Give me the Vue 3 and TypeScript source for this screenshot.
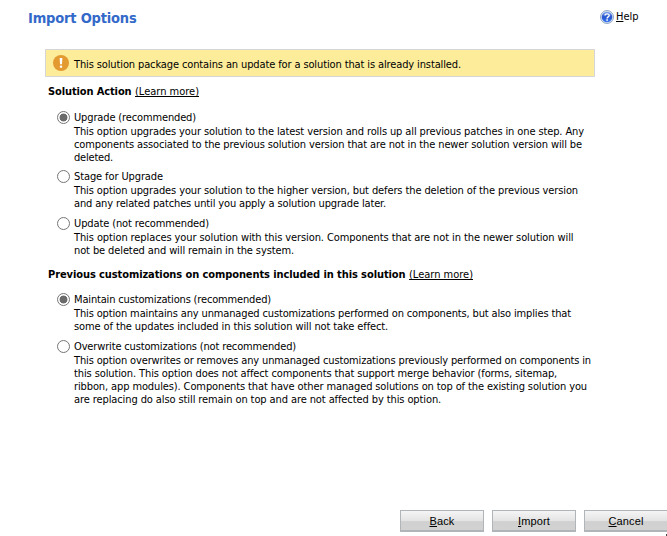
<script setup lang="ts">
import type { Directive } from 'vue'

interface Line { text: string; width: number }
interface Option { id: string; title: Line; lines: Line[]; checked: boolean }
interface Section { id: string; heading: Line; link: Line; options: Option[] }
interface Action { key: string; rest: string; width: number }

const sections: Section[] = [
  {
    id: 'action',
    heading: { text: 'Solution Action', width: 83.5 },
    link: { text: '(Learn more)', width: 64 },
    options: [
      {
        id: 'upgrade', checked: true,
        title: { text: 'Upgrade (recommended)', width: 122 },
        lines: [
          { text: 'This option upgrades your solution to the latest version and rolls up all previous patches in one step. Any', width: 510 },
          { text: 'components associated to the previous solution version that are not in the newer solution version will be', width: 508 },
          { text: 'deleted.', width: 39 },
        ],
      },
      {
        id: 'stage', checked: false,
        title: { text: 'Stage for Upgrade', width: 89 },
        lines: [
          { text: 'This option upgrades your solution to the higher version, but defers the deletion of the previous version', width: 504 },
          { text: 'and any related patches until you apply a solution upgrade later.', width: 312 },
        ],
      },
      {
        id: 'update', checked: false,
        title: { text: 'Update (not recommended)', width: 135 },
        lines: [
          { text: 'This option replaces your solution with this version. Components that are not in the newer solution will', width: 499.5 },
          { text: 'not be deleted and will remain in the system.', width: 220 },
        ],
      },
    ],
  },
  {
    id: 'custom',
    heading: { text: 'Previous customizations on components included in this solution', width: 357.5 },
    link: { text: '(Learn more)', width: 64 },
    options: [
      {
        id: 'maintain', checked: true,
        title: { text: 'Maintain customizations (recommended)', width: 197 },
        lines: [
          { text: 'This option maintains any unmanaged customizations performed on components, but also implies that', width: 497 },
          { text: 'some of the updates included in this solution will not take effect.', width: 314 },
        ],
      },
      {
        id: 'overwrite', checked: false,
        title: { text: 'Overwrite customizations (not recommended)', width: 222 },
        lines: [
          { text: 'This option overwrites or removes any unmanaged customizations previously performed on components in', width: 517 },
          { text: 'this solution. This option does not affect components that support merge behavior (forms, sitemap,', width: 483 },
          { text: 'ribbon, app modules). Components that have other managed solutions on top of the existing solution you', width: 513 },
          { text: 'are replacing do also still remain on top and are not affected by this option.', width: 367 },
        ],
      },
    ],
  },
]

const actions: Action[] = [
  { key: 'B', rest: 'ack', width: 25 },
  { key: 'I', rest: 'mport', width: 32 },
  { key: 'C', rest: 'ancel', width: 35 },
]

// Tracks the text so that it spans the given width.
const vFit: Directive<HTMLElement, number> = {
  mounted(el, { value }) {
    const count = (el.textContent ?? '').length
    const natural = el.getBoundingClientRect().width
    el.style.letterSpacing = `${(value - natural) / count}px`
  },
}
</script>

<template>
  <div class="dialog">
    <header class="top">
      <h1><span v-fit="108.5">Import Options</span></h1>
      <a class="help">
        <svg width="14" height="14" viewBox="0 0 14 14">
          <defs>
            <linearGradient id="orb" x1="0" y1="0" x2="0" y2="1">
              <stop offset="0" stop-color="#7fa6ec" />
              <stop offset=".5" stop-color="#2554cf" />
              <stop offset="1" stop-color="#3e7df0" />
            </linearGradient>
          </defs>
          <circle cx="7" cy="7" r="6.5" fill="#dbe6f5" stroke="#7892b8" stroke-width=".8" />
          <circle cx="7" cy="7" r="5.3" fill="url(#orb)" />
          <path d="M5 5.5C5 3.3 9.2 3.3 9.2 5.4C9.2 6.9 7.1 6.8 7.1 8.4" fill="none" stroke="#fff" stroke-width="1.4" />
          <rect x="6.3" y="9.3" width="1.6" height="1.5" fill="#fff" />
        </svg>
        <span><span v-fit="22.5"><u>H</u>elp</span></span>
      </a>
    </header>

    <main>
      <div class="notice">
        <svg width="16" height="16" viewBox="0 0 16 16">
          <circle cx="8" cy="8" r="8" fill="#e39a31" />
          <path d="M6.6 3h2.8L9 9.3H7z" fill="#fff" />
          <rect x="6.9" y="10.6" width="2.2" height="2.2" rx=".6" fill="#fff" />
        </svg>
        <span v-fit="387">This solution package contains an update for a solution that is already installed.</span>
      </div>

      <section v-for="s in sections" :key="s.id">
        <h2>
          <span v-fit="s.heading.width">{{ s.heading.text }}</span>
          <a v-fit="s.link.width" class="link">{{ s.link.text }}</a>
        </h2>
        <div v-for="o in s.options" :key="o.id" class="option" :class="o.id">
          <label>
            <input type="radio" :name="s.id" :checked="o.checked">
            <span v-fit="o.title.width">{{ o.title.text }}</span>
          </label>
          <p>
            <span v-for="l in o.lines" :key="l.text" class="line"><span v-fit="l.width">{{ l.text }}</span></span>
          </p>
        </div>
      </section>
    </main>

    <footer>
      <button v-for="a in actions" :key="a.key" type="button"><span v-fit="a.width"><u>{{ a.key }}</u>{{ a.rest }}</span></button>
    </footer>
    <i class="grip"></i>
  </div>
</template>

<style>
body { background: #fff; overflow: hidden; }
</style>

<style scoped>
.dialog {
  position: relative;
  box-sizing: border-box;
  width: 667px;
  height: 536px;
  display: flex;
  flex-direction: column;
  overflow: hidden;
  color: #000;
  font: 11px/13px "DejaVu Sans Condensed", "DejaVu Sans", sans-serif;
  font-stretch: condensed;
  white-space: nowrap;
}
.top {
  height: 49px;
  flex: none;
  display: flex;
  justify-content: space-between;
  align-items: flex-start;
  padding: 0 28px;
  box-sizing: border-box;
}
h1 { margin: 9px 0 0; font-size: 14.5px; line-height: 18px; color: #3369c9; }
.help { display: flex; gap: 2px; margin-top: 10px; }
.help > span { width: 23px; }
u, .link { text-decoration: underline; text-underline-offset: 1px; text-decoration-thickness: 1px; }
main { flex: 1; padding-left: 45px; }
.notice {
  box-sizing: border-box;
  width: 550px;
  height: 28px;
  display: flex;
  align-items: center;
  gap: 5px;
  padding-left: 7px;
  border: 1px solid #d6d6d6;
  background: #fded9b;
}
.notice span { padding-top: 2px; }
h2 { display: flex; gap: 3.5px; margin: 8px 0 0 3px; font-size: 11px; line-height: 13px; }
.link { font-weight: normal; }
.option { margin: 6px 0 0 12px; }
.upgrade { margin-top: 12px; }
.maintain { margin-top: 11px; }
.stage { margin-top: 5px; }
section + section h2 { margin-top: 11px; }
label { display: flex; align-items: center; height: 15px; gap: 4px; }
input {
  appearance: none;
  box-sizing: border-box;
  width: 13px;
  height: 13px;
  margin: 0;
  border: 1px solid #767676;
  border-radius: 50%;
  background: #fff;
}
input:checked { background: radial-gradient(circle, #6b6b6b 0 3.6px, #fff 4.3px); }
p { margin: 0 0 0 17px; }
.line { display: block; }
footer { height: 26px; display: flex; gap: 8px; padding-left: 400px; }
button {
  flex: none;
  box-sizing: border-box;
  width: 84px;
  height: 22px;
  padding: 0;
  border: 1px solid #b0b5b9;
  border-bottom-width: 2px;
  background: linear-gradient(#f5f5f5, #e4e4e4 50%, #d0d0d0 56%, #d2d2d2);
  color: #000;
  font: 11px/18px "Liberation Sans", Arial, sans-serif;
}
.grip { position: absolute; right: 0; bottom: 0; width: 1px; height: 2px; background: #444; }
</style>
